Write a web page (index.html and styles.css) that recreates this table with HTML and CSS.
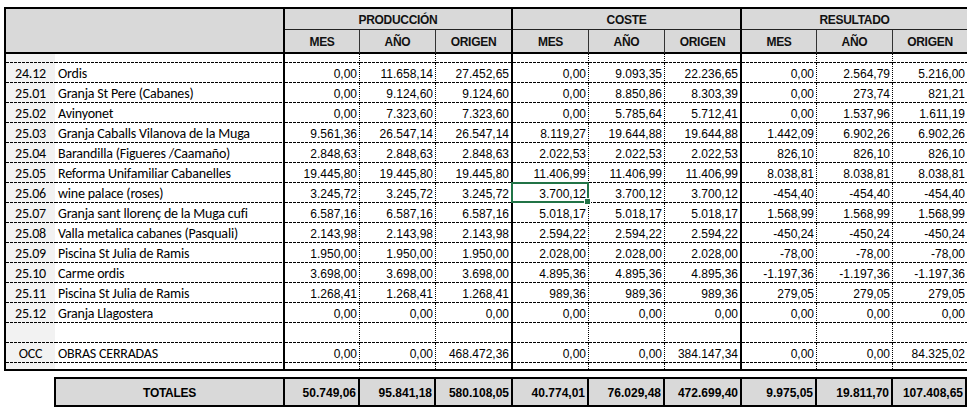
FILE: index.html
```html
<!DOCTYPE html>
<html lang="es">
<head>
<meta charset="utf-8">
<title>Resumen obras</title>
<link rel="stylesheet" href="styles.css">
</head>
<body>
<div class="sheet">
  <div class="main">
    <div class="head">
      <div class="h-blank"></div>
      <div class="h-group g-end">PRODUCCIÓN</div>
      <div class="h-group g-end">COSTE</div>
      <div class="h-group">RESULTADO</div>
      <div class="h-sub">MES</div><div class="h-sub">AÑO</div><div class="h-sub g-end">ORIGEN</div>
      <div class="h-sub">MES</div><div class="h-sub">AÑO</div><div class="h-sub g-end">ORIGEN</div>
      <div class="h-sub">MES</div><div class="h-sub">AÑO</div><div class="h-sub last">ORIGEN</div>
    </div>

    <div class="row spacer"><div class="c"></div><div class="n"></div><div class="v"></div><div class="v"></div><div class="v"></div><div class="v"></div><div class="v"></div><div class="v"></div><div class="v"></div><div class="v"></div><div class="v"></div></div>

    <div class="row"><div class="c">24.12</div><div class="n">Ordis</div><div class="v">0,00</div><div class="v">11.658,14</div><div class="v">27.452,65</div><div class="v">0,00</div><div class="v">9.093,35</div><div class="v">22.236,65</div><div class="v">0,00</div><div class="v">2.564,79</div><div class="v">5.216,00</div></div>
    <div class="row"><div class="c">25.01</div><div class="n">Granja St Pere (Cabanes)</div><div class="v">0,00</div><div class="v">9.124,60</div><div class="v">9.124,60</div><div class="v">0,00</div><div class="v">8.850,86</div><div class="v">8.303,39</div><div class="v">0,00</div><div class="v">273,74</div><div class="v">821,21</div></div>
    <div class="row"><div class="c">25.02</div><div class="n">Avinyonet</div><div class="v">0,00</div><div class="v">7.323,60</div><div class="v">7.323,60</div><div class="v">0,00</div><div class="v">5.785,64</div><div class="v">5.712,41</div><div class="v">0,00</div><div class="v">1.537,96</div><div class="v">1.611,19</div></div>
    <div class="row"><div class="c">25.03</div><div class="n">Granja Caballs Vilanova de la Muga</div><div class="v">9.561,36</div><div class="v">26.547,14</div><div class="v">26.547,14</div><div class="v">8.119,27</div><div class="v">19.644,88</div><div class="v">19.644,88</div><div class="v">1.442,09</div><div class="v">6.902,26</div><div class="v">6.902,26</div></div>
    <div class="row"><div class="c">25.04</div><div class="n">Barandilla (Figueres /Caamaño)</div><div class="v">2.848,63</div><div class="v">2.848,63</div><div class="v">2.848,63</div><div class="v">2.022,53</div><div class="v">2.022,53</div><div class="v">2.022,53</div><div class="v">826,10</div><div class="v">826,10</div><div class="v">826,10</div></div>
    <div class="row"><div class="c">25.05</div><div class="n">Reforma Unifamiliar Cabanelles</div><div class="v">19.445,80</div><div class="v">19.445,80</div><div class="v">19.445,80</div><div class="v">11.406,99</div><div class="v">11.406,99</div><div class="v">11.406,99</div><div class="v">8.038,81</div><div class="v">8.038,81</div><div class="v">8.038,81</div></div>
    <div class="row"><div class="c">25.06</div><div class="n">wine palace (roses)</div><div class="v">3.245,72</div><div class="v">3.245,72</div><div class="v">3.245,72</div><div class="v sel">3.700,12<span class="selbox"></span></div><div class="v">3.700,12</div><div class="v">3.700,12</div><div class="v">-454,40</div><div class="v">-454,40</div><div class="v">-454,40</div></div>
    <div class="row"><div class="c">25.07</div><div class="n">Granja sant llorenç de la Muga cufi</div><div class="v">6.587,16</div><div class="v">6.587,16</div><div class="v">6.587,16</div><div class="v">5.018,17</div><div class="v">5.018,17</div><div class="v">5.018,17</div><div class="v">1.568,99</div><div class="v">1.568,99</div><div class="v">1.568,99</div></div>
    <div class="row"><div class="c">25.08</div><div class="n">Valla metalica cabanes (Pasquali)</div><div class="v">2.143,98</div><div class="v">2.143,98</div><div class="v">2.143,98</div><div class="v">2.594,22</div><div class="v">2.594,22</div><div class="v">2.594,22</div><div class="v">-450,24</div><div class="v">-450,24</div><div class="v">-450,24</div></div>
    <div class="row"><div class="c">25.09</div><div class="n">Piscina St Julia de Ramis</div><div class="v">1.950,00</div><div class="v">1.950,00</div><div class="v">1.950,00</div><div class="v">2.028,00</div><div class="v">2.028,00</div><div class="v">2.028,00</div><div class="v">-78,00</div><div class="v">-78,00</div><div class="v">-78,00</div></div>
    <div class="row"><div class="c">25.10</div><div class="n">Carme ordis</div><div class="v">3.698,00</div><div class="v">3.698,00</div><div class="v">3.698,00</div><div class="v">4.895,36</div><div class="v">4.895,36</div><div class="v">4.895,36</div><div class="v">-1.197,36</div><div class="v">-1.197,36</div><div class="v">-1.197,36</div></div>
    <div class="row"><div class="c">25.11</div><div class="n">Piscina St Julia de Ramis</div><div class="v">1.268,41</div><div class="v">1.268,41</div><div class="v">1.268,41</div><div class="v">989,36</div><div class="v">989,36</div><div class="v">989,36</div><div class="v">279,05</div><div class="v">279,05</div><div class="v">279,05</div></div>
    <div class="row"><div class="c">25.12</div><div class="n">Granja Llagostera</div><div class="v">0,00</div><div class="v">0,00</div><div class="v">0,00</div><div class="v">0,00</div><div class="v">0,00</div><div class="v">0,00</div><div class="v">0,00</div><div class="v">0,00</div><div class="v">0,00</div></div>
    <div class="row"><div class="c"></div><div class="n"></div><div class="v"></div><div class="v"></div><div class="v"></div><div class="v"></div><div class="v"></div><div class="v"></div><div class="v"></div><div class="v"></div><div class="v"></div></div>
    <div class="row"><div class="c">OCC</div><div class="n">OBRAS CERRADAS</div><div class="v">0,00</div><div class="v">0,00</div><div class="v">468.472,36</div><div class="v">0,00</div><div class="v">0,00</div><div class="v">384.147,34</div><div class="v">0,00</div><div class="v">0,00</div><div class="v">84.325,02</div></div>
    <div class="row end"><div class="c"></div><div class="n"></div><div class="v"></div><div class="v"></div><div class="v"></div><div class="v"></div><div class="v"></div><div class="v"></div><div class="v"></div><div class="v"></div><div class="v"></div></div>
  </div>

  <div class="totals">
    <div class="t-label">TOTALES</div>
    <div class="t-val">50.749,06</div>
    <div class="t-val">95.841,18</div>
    <div class="t-val">580.108,05</div>
    <div class="t-val">40.774,01</div>
    <div class="t-val">76.029,48</div>
    <div class="t-val">472.699,40</div>
    <div class="t-val">9.975,05</div>
    <div class="t-val">19.811,70</div>
    <div class="t-val">107.408,65</div>
  </div>
</div>
</body>
</html>
```

FILE: styles.css
```css
* { box-sizing: border-box; }

body {
  margin: 0;
  background: #ffffff;
  color: #000;
  font-family: "Liberation Sans", Arial, sans-serif;
}

.sheet {
  padding: 7px 0 0 4px;
}

.main {
  width: 963px;
  border: 2px solid #000;
  border-right: none;
}

/* header */
.head {
  display: grid;
  grid-template-columns: 279px 75px 76px 77px 76px 76px 77px 75px 76px 74px;
  grid-template-rows: 21px 24px;
  background: #d9d9d9;
  font-weight: bold;
  font-size: 12px;
  letter-spacing: -0.3px;
  color: #111;
}

.h-blank {
  grid-row: 1 / 3;
  border-right: 2px solid #000;
  border-bottom: 2px solid #000;
}

.h-group {
  grid-column: span 3;
  display: flex;
  align-items: center;
  justify-content: center;
  border-bottom: 1px solid #222;
  padding-top: 1px;
}

.h-sub {
  display: flex;
  align-items: center;
  justify-content: center;
  border-right: 1px solid #333;
  border-bottom: 2px solid #000;
  padding-top: 2px;
}

.g-end { border-right: 2px solid #000; }
.h-sub.g-end { border-right: 2px solid #000; }
.h-sub.last { border-right: none; }

/* body rows */
.row {
  display: grid;
  grid-template-columns: 49px 230px 75px 76px 77px 76px 76px 77px 75px 76px 74px;
  height: 20px;
}

.row.spacer { height: 9px; }
.row.end { height: 6px; }

.row > div {
  display: flex;
  align-items: center;
  padding-top: 1px;
  background-image: repeating-linear-gradient(90deg, #000 0 3px, transparent 3px 4px);
  background-size: 100% 1px;
  background-position: left bottom;
  background-repeat: no-repeat;
  white-space: nowrap;
}

.row.end > div { background-image: none; }

.c {
  background-color: #f2f2f2;
  justify-content: center;
  font-family: "Carlito", "Lato", "Liberation Sans", sans-serif;
  font-size: 14px;
  letter-spacing: -0.2px;
}

.n {
  border-right: 2px solid #000;
  padding-left: 3px;
  font-family: "Carlito", "Lato", "Liberation Sans", sans-serif;
  font-size: 14px;
  letter-spacing: -0.2px;
}

.v {
  justify-content: flex-end;
  padding-right: 2px;
  font-size: 12px;
  border-right: 1px dotted #000;
}

.row > .v:nth-child(5),
.row > .v:nth-child(8) {
  border-right: 2px solid #000;
}

.row > .v:nth-child(11) { border-right: none; }

.sel { position: relative; }

.selbox {
  position: absolute;
  left: -2px;
  top: -1px;
  right: -1px;
  bottom: 0;
  border: 2px solid #217346;
}

.selbox::after {
  content: "";
  position: absolute;
  right: -4px;
  bottom: -4px;
  width: 5px;
  height: 5px;
  background: #217346;
  border: 1px solid #fff;
  box-sizing: content-box;
}

/* totals */
.totals {
  margin: 6px 0 0 50px;
  width: 913px;
  height: 30px;
  display: grid;
  grid-template-columns: 229px 75px 76px 77px 76px 76px 77px 75px 76px 74px;
  border: 2px solid #000;
  border-right: none;
  background: #d9d9d9;
  font-weight: bold;
  font-size: 12px;
}

.totals > div {
  display: flex;
  align-items: center;
  border-right: 2px solid #000;
  padding-top: 1px;
}

.t-label {
  justify-content: center;
  letter-spacing: -0.3px;
}

.t-val {
  justify-content: flex-end;
  padding-right: 2px;
}
```
